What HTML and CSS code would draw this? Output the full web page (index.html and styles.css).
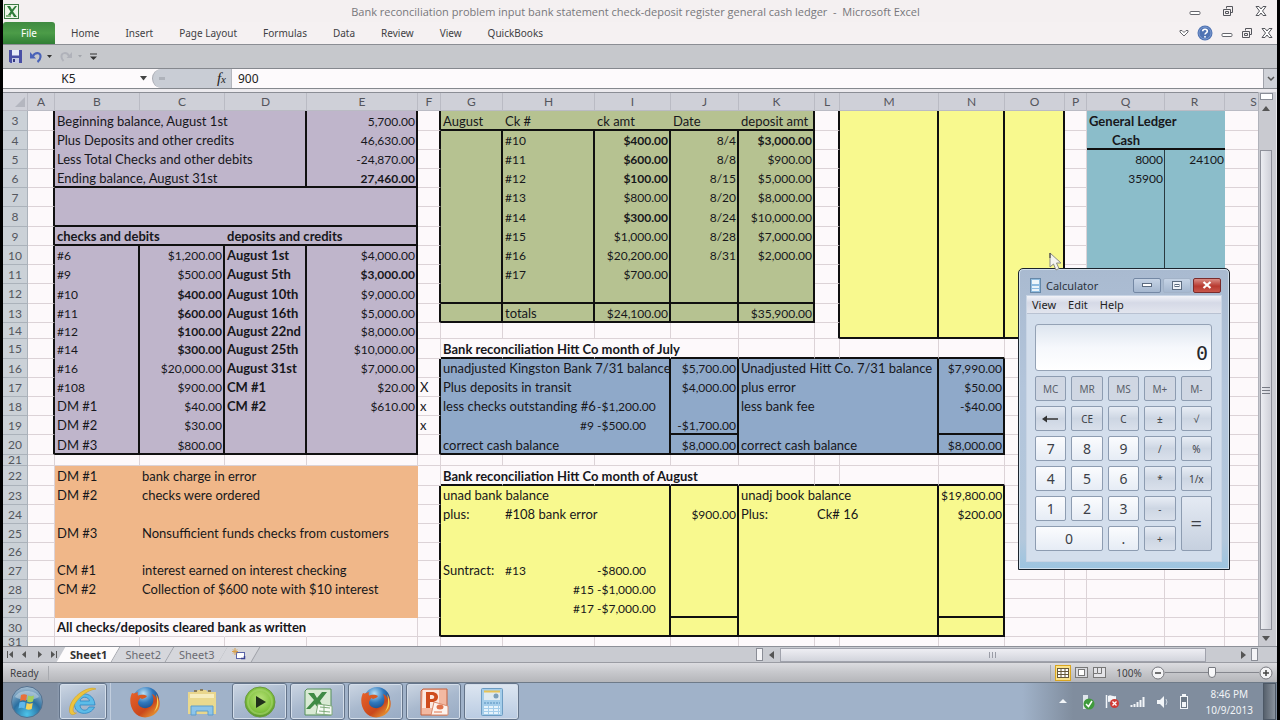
FILE: index.html
```html
<!DOCTYPE html>
<html lang="en">
<head>
<meta charset="utf-8">
<title>Bank reconciliation - Microsoft Excel</title>
<link rel="stylesheet" href="styles.css">
</head>
<body>
<svg class="defs" width="0" height="0" aria-hidden="true">
  <defs>
    <linearGradient id="gOrange" x1="0" y1="0" x2="1" y2="1"><stop offset="0" stop-color="#e8622a"/><stop offset=".6" stop-color="#c9481c"/><stop offset="1" stop-color="#f4b63c"/></linearGradient>
    <radialGradient id="gGlobe" cx=".4" cy=".25" r=".8"><stop offset="0" stop-color="#b8e0f5"/><stop offset=".45" stop-color="#2f78bd"/><stop offset="1" stop-color="#12306b"/></radialGradient>
    <radialGradient id="gOrb" cx=".5" cy=".9" r=".9"><stop offset="0" stop-color="#4cc4ea"/><stop offset=".5" stop-color="#2a6fa0"/><stop offset="1" stop-color="#a9c0d4"/></radialGradient>
    <radialGradient id="gLime" cx=".5" cy=".4" r=".6"><stop offset="0" stop-color="#b9e27c"/><stop offset=".7" stop-color="#7fc13c"/><stop offset="1" stop-color="#56942a"/></radialGradient>
    <symbol id="fox" viewBox="0 0 32 32">
      <circle cx="17" cy="14" r="13" fill="url(#gGlobe)"/>
      <path d="M3 7C5 8 6 7 9 6c-1 3 0 4 3 5-1 2-3 3-3 6 1 5 8 7 13 3 3-3 3-8 1-12 3 1 4 3 5 5 0-2 0-3-1-5 5 6 5 14 0 19-6 6-17 6-22-1C1 20 0 13 3 7z" fill="url(#gOrange)"/>
      <path d="M27 8c4 7 3 14-2 18 3-5 4-11 2-18z" fill="#f7d04e"/>
      <path d="M9 10c3-2 7-1 9 0-1 2-3 2-5 3-2-1-3-2-4-3z" fill="#d85a22"/>
    </symbol>
    <symbol id="restore" viewBox="0 0 12 12"><path d="M4.500 1.500h6v6h-2M4.500 1.500v2M1.500 4.500h7v6h-7zM3.500 6.500h3v2h-3z" fill="none" stroke="#55565c"/></symbol>
    <symbol id="close" viewBox="0 0 12 12"><path d="M1 1.500h3L6 4l2-2.500h3L7.500 6l3.500 4.500H8L6 8l-2 2.500H1L4.500 6z" fill="#fff" stroke="#55565c"/></symbol>
    <symbol id="minimize" viewBox="0 0 12 12"><rect x="1" y="6.500" width="10" height="3" rx="1" fill="#fff" stroke="#66676d"/></symbol>
  </defs>
</svg>
<div class="screen">
  <header class="titlebar">
    <svg class="app-icon" width="15" height="15" viewBox="0 0 15 15"><rect x=".5" y=".5" width="14" height="14" fill="#eef6ea" stroke="#3c7a44"/><path d="M3 2h3l2 3.500L11 2h2L9 7.500l4 5.500h-3L8 9.500 5 13H2.500l4-5.500z" fill="#2f7d3b"/><path d="M2 11h5v2H2z" fill="#7fb37b"/></svg>
    <h1 class="title">Bank reconciliation problem input bank statement check-deposit register general cash ledger &nbsp;-&nbsp; Microsoft Excel</h1>
    <div class="window-buttons">
      <button aria-label="Minimize"><svg width="12" height="12"><use href="#minimize"/></svg></button>
      <button aria-label="Restore"><svg width="12" height="12"><use href="#restore"/></svg></button>
      <button aria-label="Close"><svg width="12" height="12"><use href="#close"/></svg></button>
    </div>
  </header>
  <nav class="ribbon">
    <button class="file-tab">File</button>
    <button class="tab">Home</button><button class="tab">Insert</button><button class="tab">Page Layout</button><button class="tab">Formulas</button><button class="tab">Data</button><button class="tab">Review</button><button class="tab">View</button><button class="tab">QuickBooks</button>
    <div class="ribbon-buttons">
      <button aria-label="Expand ribbon"><svg width="10" height="8" viewBox="0 0 10 8"><path d="M1 1.500h2l2 2 2-2h2v1.500L5 7 1 3z" fill="#fff" stroke="#66676d"/></svg></button>
      <button aria-label="Help"><svg width="16" height="16" viewBox="0 0 16 16"><circle cx="8" cy="8" r="7.500" fill="#4f73b3"/><circle cx="8" cy="8" r="6" fill="none" stroke="#7d9bd0"/><path d="M5.700 6.200C5.700 3.500 10.300 3.500 10.300 6.200 10.300 7.800 8 7.800 8 9.600" fill="none" stroke="#fff" stroke-width="1.600"/><rect x="7.200" y="11" width="1.600" height="1.600" fill="#fff"/></svg></button>
      <button aria-label="Minimize workbook"><svg width="12" height="12"><use href="#minimize"/></svg></button>
      <button aria-label="Restore workbook"><svg width="12" height="12"><use href="#restore"/></svg></button>
      <button aria-label="Close workbook"><svg width="12" height="12"><use href="#close"/></svg></button>
    </div>
  </nav>
  <div class="quickbar">
    <button aria-label="Save"><svg width="13" height="13" viewBox="0 0 13 13"><path d="M0 0h13v13H1.500L0 11.500z" fill="#4a4fa5"/><rect x="3" y="0" width="7" height="5.500" fill="#e8ebf8"/><rect x="3" y="8" width="7" height="5" fill="#c5c9e4"/><rect x="4" y="9" width="2" height="3" fill="#34387e"/></svg></button>
    <button aria-label="Undo"><svg width="22" height="13" viewBox="0 0 22 13"><path d="M3 6C5 2 11 2 10.500 7c-.2 2-1.500 4-3 5" fill="none" stroke="#4a63b8" stroke-width="2.200"/><path d="M0 2v6.500h6z" fill="#4a63b8"/><path d="M17 5h5l-2.500 3z" fill="#333"/></svg></button>
    <button aria-label="Redo"><svg width="22" height="13" viewBox="0 0 22 13"><path d="M9 6C7 2 1 2 1.500 7c.2 2 1 3 2 4" fill="none" stroke="#b0b2ba" stroke-width="2"/><path d="M12 2v6H6.500z" fill="#b0b2ba"/><path d="M18 5h4l-2 2.500z" fill="#a2a4ab"/></svg></button>
    <button aria-label="Customize toolbar"><svg width="7" height="8" viewBox="0 0 7 8"><path d="M0 1h7" stroke="#333"/><path d="M0 3.500h7L3.500 7z" fill="#333"/></svg></button>
  </div>
  <div class="formula-bar">
    <input class="name-box" type="text" value="K5" aria-label="Name box">
    <button class="name-arrow" aria-label="Names"><svg width="7" height="5" viewBox="0 0 7 5"><path d="M0 0h7L3.500 4.500z" fill="#444"/></svg></button>
    <div class="fx-zone"><span class="fx-dot"></span><button class="fx" aria-label="Insert function"><i>f</i><small>x</small></button></div>
    <input class="formula" type="text" value="900" aria-label="Formula">
    <button class="expand" aria-label="Expand formula bar"><svg width="8" height="6" viewBox="0 0 8 6"><path d="M1 1l3 3 3-3" fill="none" stroke="#555" stroke-width="1.500"/></svg></button>
  </div>
  <main class="workspace">
    <div class="sheet"><table class="grid" id="grid"></table></div>
    <div class="vscroll">
      <span class="split"></span>
      <button aria-label="Scroll up"><svg width="8" height="5" viewBox="0 0 8 5"><path d="M4 0l4 5H0z" fill="#555"/></svg></button>
      <div class="vtrack"><div class="vthumb"><svg width="8" height="7" viewBox="0 0 8 7"><path d="M0 .5h8M0 3.500h8M0 6.500h8" stroke="#777a84"/></svg></div></div>
      <button aria-label="Scroll down"><svg width="8" height="5" viewBox="0 0 8 5"><path d="M4 5l4-5H0z" fill="#555"/></svg></button>
    </div>
  </main>
  <div class="sheet-tabs">
    <div class="sheet-nav">
      <button aria-label="First sheet"><svg width="7" height="7" viewBox="0 0 7 7"><path d="M.5 0v7" stroke="#555"/><path d="M6 0v7L2 3.500z" fill="#555"/></svg></button>
      <button aria-label="Previous sheet"><svg width="7" height="7" viewBox="0 0 7 7"><path d="M5 0v7L1 3.500z" fill="#555"/></svg></button>
      <button aria-label="Next sheet"><svg width="7" height="7" viewBox="0 0 7 7"><path d="M2 0v7l4-3.500z" fill="#555"/></svg></button>
      <button aria-label="Last sheet"><svg width="7" height="7" viewBox="0 0 7 7"><path d="M6.500 0v7" stroke="#555"/><path d="M1 0v7l4-3.500z" fill="#555"/></svg></button>
    </div>
    <button class="sheet-tab active">Sheet1</button>
    <button class="sheet-tab">Sheet2</button>
    <button class="sheet-tab">Sheet3</button>
    <button class="sheet-tab new-tab" aria-label="Insert sheet"><svg width="15" height="13" viewBox="0 0 15 13"><rect x="4.500" y="4.500" width="8" height="6" fill="#fff" stroke="#5a64a8"/><path d="M9 10.500h3.500V8" stroke="#3a4290" fill="none" stroke-width="1.500"/><path d="M3 0v7M0 3.500h6M1 1.500l4 4M5 1.500l-4 4" stroke="#d8a04a"/></svg></button>
    <div class="hscroll">
      <span class="grip"></span>
      <button aria-label="Scroll left"><svg width="6" height="8" viewBox="0 0 6 8"><path d="M5 0v8L0 4z" fill="#555"/></svg></button>
      <div class="htrack"><div class="hthumb"><svg width="8" height="6" viewBox="0 0 8 6"><path d="M.5 0v6M3.500 0v6M6.500 0v6" stroke="#9a9ca6"/></svg></div></div>
      <button aria-label="Scroll right"><svg width="6" height="8" viewBox="0 0 6 8"><path d="M1 0v8l5-4z" fill="#555"/></svg></button>
      <span class="grip"></span>
    </div>
  </div>
  <footer class="status">
    <span class="ready">Ready</span>
    <div class="views">
      <button class="view on" aria-label="Normal view"><svg width="12" height="10" viewBox="0 0 12 10"><rect x=".5" y=".5" width="11" height="9" fill="#fff" stroke="#66583a"/><path d="M0 3.500h12M0 6.500h12M4 0v10M8 0v10" stroke="#66583a"/></svg></button>
      <button class="view" aria-label="Page layout view"><svg width="13" height="11" viewBox="0 0 13 11"><rect x=".5" y=".5" width="12" height="10" fill="#d8d9de" stroke="#777"/><rect x="3.500" y="2.500" width="6" height="6" fill="#fff" stroke="#777"/></svg></button>
      <button class="view" aria-label="Page break view"><svg width="13" height="11" viewBox="0 0 13 11"><rect x=".5" y=".5" width="12" height="10" fill="#e4e4e8" stroke="#777"/><path d="M4.500 0v6.500h4V0M0 6.500h4" fill="none" stroke="#777"/></svg></button>
    </div>
    <button class="zoom-text">100%</button>
    <button class="round" aria-label="Zoom out"><svg width="14" height="14" viewBox="0 0 14 14"><circle cx="7" cy="7" r="6" fill="#f4f4f6" stroke="#77787e"/><path d="M4 7h6" stroke="#444" stroke-width="1.500"/></svg></button>
    <input class="zoom" type="range" min="0" max="100" value="50" aria-label="Zoom">
    <button class="round" aria-label="Zoom in"><svg width="14" height="14" viewBox="0 0 14 14"><circle cx="7" cy="7" r="6" fill="#f4f4f6" stroke="#77787e"/><path d="M4 7h6M7 4v6" stroke="#444" stroke-width="1.500"/></svg></button>
  </footer>
  <div class="taskbar">
    <button class="start" aria-label="Start"><svg width="34" height="34" viewBox="0 0 34 34"><circle cx="17" cy="17" r="15.500" fill="url(#gOrb)" stroke="#54718f"/><path d="M5 12C9 4 25 4 29 12c-6 4-18 4-24 0z" fill="#dbe6ee" opacity=".45"/><path d="M11 10c2-1 4-1 6 0l-1 6c-2-1-4-1-6 0z" fill="#e8703a"/><path d="M18 10.500c2 1 4 1 6 0l-1 6c-2 1-4 1-6 0z" fill="#a2cf5c"/><path d="M9.500 17.500c2-1 4-1 6 0l-1 6c-2-1-4-1-6 0z" fill="#5fb7ea"/><path d="M16.700 18c2 1 4 1 6 0l-1 6c-2 1-4 1-6 0z" fill="#f6d256"/></svg></button>
    <button class="task framed ie" aria-label="Internet Explorer"><svg width="32" height="32" viewBox="0 0 32 32"><path d="M28 19H13c0 6 7 7 9 2h5.500C24 30 7 30 7.500 17.500 8 5 27 4 28 19zM13 15h9.500c-1-5-8.500-5-9.500 0z" fill="#5dbce8" stroke="#2b86c4" stroke-width=".8" fill-rule="evenodd"/><path d="M29 3C23-1 4 9 2.500 23c-.5 6 3 7 7 4-3 0-4-2-3-6C9 13 20 4 29 3z" fill="#ecc33e" stroke="#c99a1e" stroke-width=".5"/></svg></button>
    <button class="task pinned" aria-label="Firefox"><svg width="32" height="32"><use href="#fox"/></svg></button>
    <button class="task folder" aria-label="Explorer"><svg width="32" height="32" viewBox="0 0 32 32"><path d="M2 6h8l2-2h8l2 2h8v22H2z" fill="#e9d68c"/><path d="M4 8h24v7H4z" fill="#f6edbe"/><path d="M2 12h28v14H2z" fill="#ead98e"/><path d="M5 29V20h22v9h-5v-4H10v4z" fill="#8cc4ea" stroke="#5d9dcc"/><path d="M8 5h3M14 4h3M22 5h3" stroke="#7d6a3a" stroke-width="1.500"/></svg></button>
    <button class="task framed" aria-label="Media player"><svg width="32" height="32" viewBox="0 0 32 32"><circle cx="16" cy="16" r="15" fill="url(#gLime)" stroke="#6a9a40"/><circle cx="16" cy="16" r="12" fill="none" stroke="#a5d46c" opacity=".6" stroke-width="2"/><path d="M12 10v12l10-6z" fill="#20301a"/></svg></button>
    <button class="task framed" aria-label="Excel"><svg width="30" height="30" viewBox="0 0 30 30"><path d="M4 2h24v26H2V4z" fill="#d9ead4" stroke="#55905a"/><path d="M5 6h6l3 5 5-6h5l-7 9 4 7h-6l-3-4-5 5H3l8-9z" fill="#3f8a45"/><path d="M15 17l14 2v9l-16-1z" fill="#f5faf3" stroke="#7faa7a"/><path d="M17 20l10 1M16 24l11 1M21 18v9" stroke="#7faa7a"/></svg></button>
    <button class="task framed" aria-label="Firefox window"><svg width="32" height="32"><use href="#fox"/></svg></button>
    <button class="task framed" aria-label="PowerPoint"><svg width="30" height="30" viewBox="0 0 30 30"><path d="M4 2h24v26H2V4z" fill="#f3b9a2" stroke="#c5603c"/><path d="M4 3h16v18H3z" fill="#fbe8df"/><path d="M7 21V5h6c8 0 8 10 0 10h-2v6zM11 8v4h2c3 0 3-4 0-4z" fill="#cf4c1c" fill-rule="evenodd"/><path d="M15 15l14 4v9H12z" fill="#fdf3ee" stroke="#d98a6c"/><ellipse cx="21" cy="20" rx="3.500" ry="2.500" fill="#e0724a"/><path d="M15 25h8" stroke="#e0724a"/></svg></button>
    <button class="task framed lit" aria-label="Calculator window"><svg width="22" height="28" viewBox="0 0 22 28"><rect x=".5" y=".5" width="21" height="27" rx="1" fill="#a4cdea" stroke="#6d9cc2"/><rect x="3" y="3" width="16" height="9" fill="#dfeaf0"/><path d="M3 3.500h16" stroke="#e7c356" stroke-width="2"/><circle cx="15" cy="8" r="2.500" fill="#7c9fb8"/><path d="M3 15h16" stroke="#5690bd" stroke-dasharray="2 1"/><path d="M3 19h16M3 22h16M3 25h16" stroke="#e6f3fb" stroke-width="2" stroke-dasharray="4 1"/></svg></button>
    <div class="tray">
      <svg width="8" height="5" viewBox="0 0 8 5"><path d="M4 0l4 4H0z" fill="#f2f5f8"/></svg>
      <svg width="14" height="16" viewBox="0 0 14 16"><path d="M2 1h5v14H2z" fill="#dfe5ea"/><circle cx="8" cy="10" r="5.500" fill="#3f9a3c"/><path d="M5 10l2.500 2.500L11 7" stroke="#fff" stroke-width="1.500" fill="none"/></svg>
      <svg width="15" height="15" viewBox="0 0 15 15"><path d="M1.500 1v13" stroke="#f2f5f8" stroke-width="1.500"/><path d="M3 2c3-2 4 1 8 0v6c-4 1-5-1-8 0z" fill="#f2f5f8"/><circle cx="9.500" cy="9.500" r="4.500" fill="#cf3a34"/><path d="M7.500 7.500l4 4M11.500 7.500l-4 4" stroke="#fff" stroke-width="1.300"/></svg>
      <svg width="16" height="12" viewBox="0 0 16 12"><path d="M1.500 9v2M4.500 8v3M7.500 6v5M10.500 4v7M13.500 1v10" stroke="#f2f5f8" stroke-width="2"/></svg>
      <svg width="13" height="14" viewBox="0 0 13 14"><path d="M1 5h3l4-4v12L4 9H1z" fill="#f2f5f8"/><path d="M10 4q2 3 0 6" stroke="#c8d2dc" fill="none"/></svg>
      <svg width="10" height="16" viewBox="0 0 10 16"><rect x="3" y="0" width="4" height="2" fill="#f2f5f8"/><rect x="1.500" y="2.500" width="7" height="12" fill="#6c7886" stroke="#f2f5f8"/><rect x="3" y="8" width="4" height="5" fill="#f2f5f8"/></svg>
      <time class="clock"><span>8:46 PM</span><span>10/9/2013</span></time>
      <button class="show-desktop" aria-label="Show desktop"></button>
    </div>
  </div>

  <section class="calc" aria-label="Calculator">
    <div class="calc-title">
      <svg width="11" height="15" viewBox="0 0 11 15"><rect x=".5" y=".5" width="10" height="14" fill="#8fbce0" stroke="#6688a8"/><rect x="2" y="2" width="7" height="4" fill="#eef6fa"/><path d="M2 9h7M2 12h7" stroke="#e8f3fa" stroke-width="2"/></svg>
      <h2>Calculator</h2>
      <button class="cw" aria-label="Minimize calculator"><svg width="10" height="5" viewBox="0 0 10 5"><rect x=".5" y=".5" width="9" height="3" fill="#fff" stroke="#5c6b80"/></svg></button>
      <button class="cw off" aria-label="Maximize calculator"><svg width="10" height="9" viewBox="0 0 10 9"><rect x=".5" y=".5" width="9" height="8" fill="#eef2f8" stroke="#5c6b80"/><rect x="3" y="3.500" width="4" height="2" fill="#fff" stroke="#5c6b80"/></svg></button>
      <button class="cw red" aria-label="Close calculator"><svg width="10" height="8" viewBox="0 0 10 8"><path d="M1.500 1l7 6M8.500 1l-7 6" stroke="#fff" stroke-width="2.200"/></svg></button>
    </div>
    <div class="calc-body">
      <nav class="calc-menu"><button>View</button><button>Edit</button><button>Help</button></nav>
      <input class="display" type="text" value="0" readonly aria-label="Result">
      <div class="keys">
        <button class="mem">MC</button><button class="mem">MR</button><button class="mem">MS</button><button class="mem">M+</button><button class="mem">M-</button>
        <button class="fn" aria-label="Backspace"><svg width="17" height="8" viewBox="0 0 17 8"><path d="M3 4h13" stroke="#333" stroke-width="1.500"/><path d="M0 4l5-3.500v7z" fill="#333"/></svg></button><button class="fn">CE</button><button class="fn">C</button><button class="fn">±</button><button class="fn">√</button>
        <button>7</button><button>8</button><button>9</button><button class="fn">/</button><button class="fn">%</button>
        <button>4</button><button>5</button><button>6</button><button class="fn">*</button><button class="fn">1/x</button>
        <button>1</button><button>2</button><button>3</button><button class="fn">-</button><button class="equals">=</button>
        <button class="zero">0</button><button>.</button><button class="fn">+</button>
      </div>
    </div>
  </section>
  <svg class="pointer" width="14" height="20" viewBox="0 0 14 20"><path d="M1 1v14l3.500-3 2.500 6 3-1.500-2.500-5.500H12z" fill="#f4f4f0" stroke="#8b8b84"/><path d="M1 1v5" stroke="#333"/></svg>
</div>
<script src="sheet.js"></script>
</body>
</html>
```

FILE: styles.css
```css
* { box-sizing: border-box; }
body { margin: 0; background: #000; font-family: "Noto Sans", "Open Sans", sans-serif; font-size: 10px; color: #3f3f44; }
button, input { font: inherit; color: inherit; margin: 0; padding: 0; border: 0; background: none; }
button { display: flex; align-items: center; justify-content: center; }
svg { display: block; flex: none; }
.defs { position: absolute; }
.screen { position: relative; display: flex; flex-direction: column; height: 100vh; min-height: 720px; padding: 0 3px; overflow: hidden; }

.titlebar { display: grid; grid-template-columns: 1fr auto 1fr; align-items: center; height: 22px; padding: 0 10px 0 1px; background: #f4f0f1; }
.title { margin: 0; font-family: "Open Sans", "Noto Sans", sans-serif; font-size: 11px; font-weight: 400; color: #77777b; white-space: nowrap; }
.window-buttons { display: flex; justify-content: flex-end; gap: 21px; }

.ribbon { display: flex; height: 23px; background: #f5f1f2; border-bottom: 1px solid #8b8e94; }
.file-tab { width: 52px; margin-right: 3px; border-radius: 3px 3px 0 0; background: linear-gradient(#3f8a41, #4c9c48 50%, #2f7e35); color: #fff; }
.tab { padding: 0 13px; }
.ribbon-buttons { display: flex; align-items: center; gap: 8px; margin-left: auto; padding-right: 4px; }

.quickbar { display: flex; align-items: center; gap: 8px; height: 24px; padding-left: 6px; background: #c6c8cc; border-bottom: 1px solid #85888e; }

.formula-bar { display: flex; height: 20px; background: #fdfafc; border-bottom: 1px solid #85888e; font-size: 12px; color: #222; }
.name-box { width: 131px; text-align: center; }
.name-arrow { width: 18px; }
.fx-zone { display: flex; align-items: center; justify-content: space-between; width: 80px; padding: 0 5px 0 6px; border-right: 1px solid #b4b6bd; border-left: 1px solid #a8aab2; border-radius: 10px 0 0 10px; background: #c9cdd5; }
.fx-dot { width: 6px; height: 3px; background: #aeb2ba; }
.fx { align-items: baseline; font-family: "Liberation Serif", serif; font-size: 15px; }
.fx small { font-size: 11px; font-style: italic; }
.formula { flex: 1; min-width: 0; padding-left: 6px; }
.expand { width: 14px; background: #d0d2d8; border-left: 1px solid #a0a2aa; }

.workspace { display: flex; flex: 1; min-height: 0; padding-top: 3px; background: #eceaee; }
.sheet { flex: 1; min-width: 0; overflow: hidden; background: #fdf9fb; border-top: 1px solid #8b8d95; }
.grid { width: calc(100% + 25px); table-layout: fixed; border-spacing: 0; font-family: Lato, sans-serif; font-size: 13px; line-height: 15px; color: #17171b; }
.grid td, .grid th { padding: 0 2px; white-space: nowrap; font-weight: 400; vertical-align: middle; border: 0 solid #dcd3d7; border-width: 0 1px 1px 0; }
.grid thead th { height: 18px; font-size: 12px; background: #cfd0d8; border-color: #babbc4; color: #54555c; }
.grid tbody th { padding: 0; font-size: 12px; background: #cbd1d7; border-color: #abb2ba; color: #54575e; }
.grid .corner svg { margin-left: auto; }
.clip { display: block; height: 10px; line-height: 10px; overflow: hidden; }
.grid td { text-align: left; }
.grid td.right { text-align: right; padding-right: 1px; }
.grid td.mid { text-align: center; }
.grid td.bold { font-weight: 700; }
.grid td.number { font-size: 12px; }
.grid td.spill { border-right-color: transparent; }
.grid td.purple, .grid td.green, .grid td.yellow, .grid td.teal, .grid td.blue, .grid td.orange { border-width: 0; }
.purple { background: #bfb5cb; }
.green { background: #b6c291; }
.yellow { background: #f8f98e; }
.teal { background: #8bbdca; }
.blue { background: #8fa9c9; }
.orange { background: #f0b789; }
.grid td.line-right { border-right: 2px solid #101010; }
.grid td.line-thin { border-right: 1px solid #2a3a40; }
.grid td.line-bottom { padding-top: 2px; border-bottom: 2px solid #101010; }

.vscroll { display: flex; flex-direction: column; align-items: center; width: 19px; padding-right: 3px; background: #c9cad0; border-left: 1px solid #b0b2ba; border-right: 1px solid #e8e8ec; }
.vscroll button { width: 100%; height: 16px; }
.split { width: 13px; height: 7px; margin-top: 1px; background: #fff; border: 1px solid #8a8d96; }
.vtrack { display: flex; flex: 1; flex-direction: column; width: 100%; padding-top: 34px; }
.vthumb { display: flex; flex: 1; align-items: center; justify-content: center; margin: 0 1px; background: linear-gradient(90deg, #ecedf2, #cfd0d8); border: 1px solid #8f919b; }

.sheet-tabs { display: flex; height: 16px; background: #c9cbd1; border-top: 1px solid #8d9098; }
.sheet-nav { display: flex; align-items: center; justify-content: space-around; width: 58px; }
.sheet-tab { position: relative; isolation: isolate; padding: 0 9px; font-size: 11px; color: #6a6b72; }
.sheet-tab::before { content: ""; position: absolute; z-index: -1; inset: 0; background: #d6d7dc; border-right: 1px solid #9c9ea6; transform: skewX(-30deg); }
.sheet-tab.active { font-weight: 700; color: #333; }
.sheet-tab.active::before { background: #fdfbfc; }
.hscroll { display: flex; flex: 0 1 521px; align-items: center; margin-left: auto; padding-right: 19px; }
.hscroll button { width: 17px; }
.grip { width: 7px; height: 13px; border: 1px solid #8a8d96; background: #f4f4f7; }
.htrack { flex: 1; padding-right: 28px; }
.hthumb { display: flex; align-items: center; justify-content: center; height: 14px; background: linear-gradient(#eeeef3, #d2d4dc); border: 1px solid #a0a2ac; }

.status { display: flex; align-items: center; height: 20px; padding-right: 4px; background: linear-gradient(#dcdce0, #c8c9cd 45%, #b5b6ba); border-top: 1px solid #9a9ca3; }
.ready { width: 46px; padding-left: 7px; border-right: 1px solid #a8aaaf; }
.views { display: flex; align-items: center; gap: 2px; margin-left: auto; padding-left: 4px; border-left: 1px solid #a8aaaf; }
.view { width: 16px; height: 16px; }
.view.on { background: #fbe38a; border: 1px solid #d9a520; }
.zoom-text { width: 44px; }
.zoom { width: 94px; height: 14px; appearance: none; }
.zoom::-webkit-slider-runnable-track { height: 1px; background: #85878e; }
.zoom::-webkit-slider-thumb { appearance: none; width: 8px; height: 11px; margin-top: -5px; border: 1px solid #77797f; border-radius: 1px 1px 4px 4px; background: #f8f8fa; }

.taskbar { display: flex; gap: 3px; height: 38px; background: linear-gradient(90deg, #8390a3 0, #8390a3 54px, #a0b2c9 60px, #a0b2c9 80%, #808d9e 84%, #808d9e); border-top: 1px solid #6e7a88; }
.start { width: 56px; padding-right: 8px; margin-right: -3px; }
.task { width: 55px; }
.task.framed { border: 1px solid #64748a; border-radius: 3px; background: linear-gradient(160deg, #ccd6e3, #a9b9ce 50%, #98abc4); box-shadow: inset 0 0 0 1px #d4deea; }
.task.lit { background: linear-gradient(#dde6f1, #b9cbe2); }
.task.ie { width: 48px; }
.task.pinned { width: 62px; padding-left: 6px; border-left: 1px solid #c2cede; }
.task.folder { width: 54px; }
.tray { display: flex; align-items: center; gap: 10px; margin-left: auto; color: #f1f4f7; }
.tray > svg:first-child { margin-right: 4px; }
.clock { display: flex; flex-direction: column; align-items: center; margin-left: 7px; line-height: 16px; }
.show-desktop { align-self: stretch; width: 13px; margin-right: 1px; border: 1px solid #4d5866; background: linear-gradient(90deg, #57616d, #8a939e); }

.calc { position: absolute; left: 1018px; top: 268px; width: 212px; padding: 0 7px 7px; border: 1px solid #1b232c; border-radius: 5px 5px 0 0; background: linear-gradient(#a9bad0, #b3c5db 40%, #b4c8dc 90%, #9cc4e0); box-shadow: inset 0 0 0 1px #d0dfec; }
.calc-title { display: flex; align-items: center; height: 26px; padding: 6px 1px 0 4px; }
.calc-title h2 { flex: 1; margin: 0 0 0 5px; font-size: 11px; font-weight: 400; color: #2c3440; }
.cw { width: 28px; height: 15px; margin-left: 2px; border: 1px solid #7488a4; border-radius: 2px; background: linear-gradient(#c5d3e5, #a5b7cf); }
.cw.off { border-color: #a3b3c8; }
.cw.red { border-color: #7a2b2b; background: linear-gradient(#d98d85, #b8392f 55%, #c8574b); }
.calc-body { background: #d3deec; border: 1px solid #c8d4e4; }
.calc-menu { display: flex; gap: 12px; height: 18px; padding: 0 5px; background: linear-gradient(#f2f3f8, #d5d9e6 40%, #e2e5ee); border-bottom: 1px solid #b9c2d2; font-size: 11px; color: #222; }
.display { display: block; width: calc(100% - 17px); height: 47px; margin: 10px 9px 5px 8px; padding: 10px 3px 0 0; border: 1px solid #94a2b5; border-radius: 3px; background: linear-gradient(#dde5ef, #f6f8fc 50%, #fff); font-family: "DejaVu Sans Mono", monospace; font-size: 20px; color: #26282c; text-align: right; }
.keys { display: grid; grid-template-columns: repeat(5, 1fr); grid-auto-rows: 25px; gap: 5px; padding: 0 9px 10px 8px; }
.keys button { border: 1px solid #8d9cb1; border-radius: 2px; background: linear-gradient(#fbfcfe, #e6ecf5); font-size: 14px; color: #3c3f47; }
.keys .mem { background: #d0d7e3; font-size: 10px; color: #5a5f6a; }
.keys .fn { background: linear-gradient(#e8edf5, #cdd6e3 50%, #d9e0eb); font-size: 10px; }
.keys .equals { grid-row: span 2; background: linear-gradient(#e4eaf3, #c6d0df); font-size: 20px; }
.keys .zero { grid-column: span 2; }
.pointer { position: absolute; left: 1049px; top: 252px; }
```

FILE: sheet.js
```js
const columns = ["A","B","C","D","E","F","G","H","I","J","K","L","M","N","O","P","Q","R","S"];
const widths = [25, 27, 85, 85, 82, 111, 23, 62, 92, 76, 68, 76, 25, 99, 66, 60, 22, 78, 60, 0];
const firstRow = 3;
const heights = [20,19,19,19,19,20,19,19,19,20,19,16,20,19,19,19,19,20,11,20,19,19,19,18,19,19,19,19,11];

// fills: class, first column, first row, last column, last row
const fills = [
  ["purple","B",3,"E",20], ["green","G",3,"K",13], ["yellow","M",3,"O",14], ["teal","Q",3,"R",14],
  ["blue","G",16,"N",20], ["yellow","G",23,"N",30], ["orange","B",22,"E",29],
  ["spill","G",15,"I",15], ["spill","G",22,"J",22], ["spill","B",30,"D",30]
];
// rules on the right edge of a column: column, first row, last row
const rightLines = [
  ["A",3,20],["E",3,20],["D",3,6],["B",10,20],["C",10,20],["D",10,20],
  ["F",3,13],["G",4,13],["H",4,13],["I",4,13],["J",4,13],["K",3,13],
  ["L",3,14],["M",3,14],["N",3,14],["O",3,14],
  ["F",16,20],["I",16,20],["J",16,20],["M",16,20],["N",16,20],
  ["F",23,30],["I",23,30],["J",23,30],["M",23,30],["N",23,30]
];
// rules on the bottom edge of a row: row, first column, last column
const bottomLines = [
  [6,"B","E"],[8,"B","E"],[9,"B","E"],[20,"B","E"],
  [3,"G","K"],[12,"G","K"],[13,"G","K"],[14,"M","O"],[4,"Q","R"],
  [15,"G","N"],[19,"J","J"],[19,"N","N"],[20,"G","N"],
  [22,"G","N"],[29,"J","J"],[29,"N","N"],[30,"G","N"]
];
// modifiers before the text: > right, ^ centre, * bold
const cells = {
  B3:"Beginning balance, August 1st", E3:">5,700.00", B4:"Plus Deposits and other credits", E4:">46,630.00",
  B5:"Less Total Checks and other debits", E5:">-24,870.00", B6:"Ending balance, August 31st", E6:">*27,460.00",
  B9:"*checks and debits", D9:"*deposits and credits",
  B10:"#6", C10:">$1,200.00", D10:"*August 1st", E10:">$4,000.00",
  B11:"#9", C11:">$500.00", D11:"*August 5th", E11:">*$3,000.00",
  B12:"#10", C12:">*$400.00", D12:"*August 10th", E12:">$9,000.00",
  B13:"#11", C13:">*$600.00", D13:"*August 16th", E13:">$5,000.00",
  B14:"#12", C14:">*$100.00", D14:"*August 22nd", E14:">$8,000.00",
  B15:"#14", C15:">*$300.00", D15:"*August 25th", E15:">$10,000.00",
  B16:"#16", C16:">$20,000.00", D16:"*August 31st", E16:">$7,000.00",
  B17:"#108", C17:">$900.00", D17:"*CM #1", E17:">$20.00", F17:"X",
  B18:"DM #1", C18:">$40.00", D18:"*CM #2", E18:">$610.00", F18:"x",
  B19:"DM #2", C19:">$30.00", F19:"x", B20:"DM #3", C20:">$800.00",
  B22:"DM #1", C22:"bank charge in error", B23:"DM #2", C23:"checks were ordered",
  B25:"DM #3", C25:"Nonsufficient funds checks from customers",
  B27:"CM #1", C27:"interest earned on interest checking",
  B28:"CM #2", C28:"Collection of $600 note with $10 interest",
  B30:"*All checks/deposits cleared bank as written",
  G3:"August", H3:"Ck #", I3:"ck amt", J3:"Date", K3:"deposit amt",
  H4:"#10", I4:">*$400.00", J4:">8/4", K4:">*$3,000.00",
  H5:"#11", I5:">*$600.00", J5:">8/8", K5:">$900.00",
  H6:"#12", I6:">*$100.00", J6:">8/15", K6:">$5,000.00",
  H7:"#13", I7:">$800.00", J7:">8/20", K7:">$8,000.00",
  H8:"#14", I8:">*$300.00", J8:">8/24", K8:">$10,000.00",
  H9:"#15", I9:">$1,000.00", J9:">8/28", K9:">$7,000.00",
  H10:"#16", I10:">$20,200.00", J10:">8/31", K10:">$2,000.00",
  H11:"#17", I11:">$700.00", H13:"totals", I13:">$24,100.00", K13:">$35,900.00",
  G15:"*Bank reconciliation Hitt Co month of July",
  G16:"unadjusted Kingston Bank 7/31 balance", J16:">$5,700.00", K16:"Unadjusted Hitt Co. 7/31 balance", N16:">$7,990.00",
  G17:"Plus deposits in transit", J17:">$4,000.00", K17:"plus error", N17:">$50.00",
  G18:"less checks outstanding #6", I18:"-$1,200.00", K18:"less bank fee", N18:">-$40.00",
  H19:">#9", I19:"-$500.00", J19:">-$1,700.00",
  G20:"correct cash balance", J20:">$8,000.00", K20:"correct cash balance", N20:">$8,000.00",
  G22:"*Bank reconciliation Hitt Co month of August",
  G23:"unad bank balance", K23:"unadj book balance", N23:">$19,800.00",
  G24:"plus:", H24:"#108 bank error", J24:">$900.00", K24:"Plus:", L24:"Ck# 16", N24:">$200.00",
  G27:"Suntract:", H27:"#13", I27:"-$800.00", H28:">#15", I28:"-$1,000.00", H29:">#17", I29:"-$7,000.00",
  Q3:"*General Ledger", Q4:"^*Cash", Q5:">8000", R5:">24100", Q6:">35900"
};

const at = name => columns.indexOf(name);
const grid = document.getElementById("grid");
const group = document.createElement("colgroup");
widths.forEach(width => {
  const col = document.createElement("col");
  if (width) col.style.width = width + "px";
  group.append(col);
});
grid.append(group);

const head = grid.createTHead().insertRow();
head.innerHTML = '<th class="corner"><svg width="10" height="10" viewBox="0 0 10 10"><path d="M10 0v10H0z" fill="#b4b6bf"/></svg></th>'
  + columns.map(name => '<th scope="col">' + name + "</th>").join("");

const body = grid.createTBody();
heights.forEach((height, index) => {
  const number = firstRow + index;
  const row = body.insertRow();
  row.style.height = height + "px";
  const label = document.createElement("th");
  label.scope = "row";
  if (height < 12) {
    const clip = document.createElement("span");
    clip.className = "clip";
    clip.textContent = number;
    label.append(clip);
  } else {
    label.textContent = number;
  }
  row.append(label);
  columns.forEach((name, c) => {
    const cell = row.insertCell();
    fills.forEach(([kind, c1, r1, c2, r2]) => {
      if (c >= at(c1) && c <= at(c2) && number >= r1 && number <= r2) cell.classList.add(kind);
    });
    if (rightLines.some(([col, r1, r2]) => col === name && number >= r1 && number <= r2)) cell.classList.add("line-right");
    if (name === "Q" && number >= 5 && number <= 14) cell.classList.add("line-thin");
    if (bottomLines.some(([r, c1, c2]) => r === number && c >= at(c1) && c <= at(c2))) cell.classList.add("line-bottom");
    const value = cells[name + number];
    if (!value) return;
    const [, marks, text] = value.match(/^([>^*]*)(.*)$/);
    if (marks.includes(">")) cell.classList.add("right");
    if (marks.includes("^")) cell.classList.add("mid");
    if (marks.includes("*")) cell.classList.add("bold");
    if (/^[-$#\d.,\/]+$/.test(text)) cell.classList.add("number");
    cell.textContent = text;
  });
});
```
